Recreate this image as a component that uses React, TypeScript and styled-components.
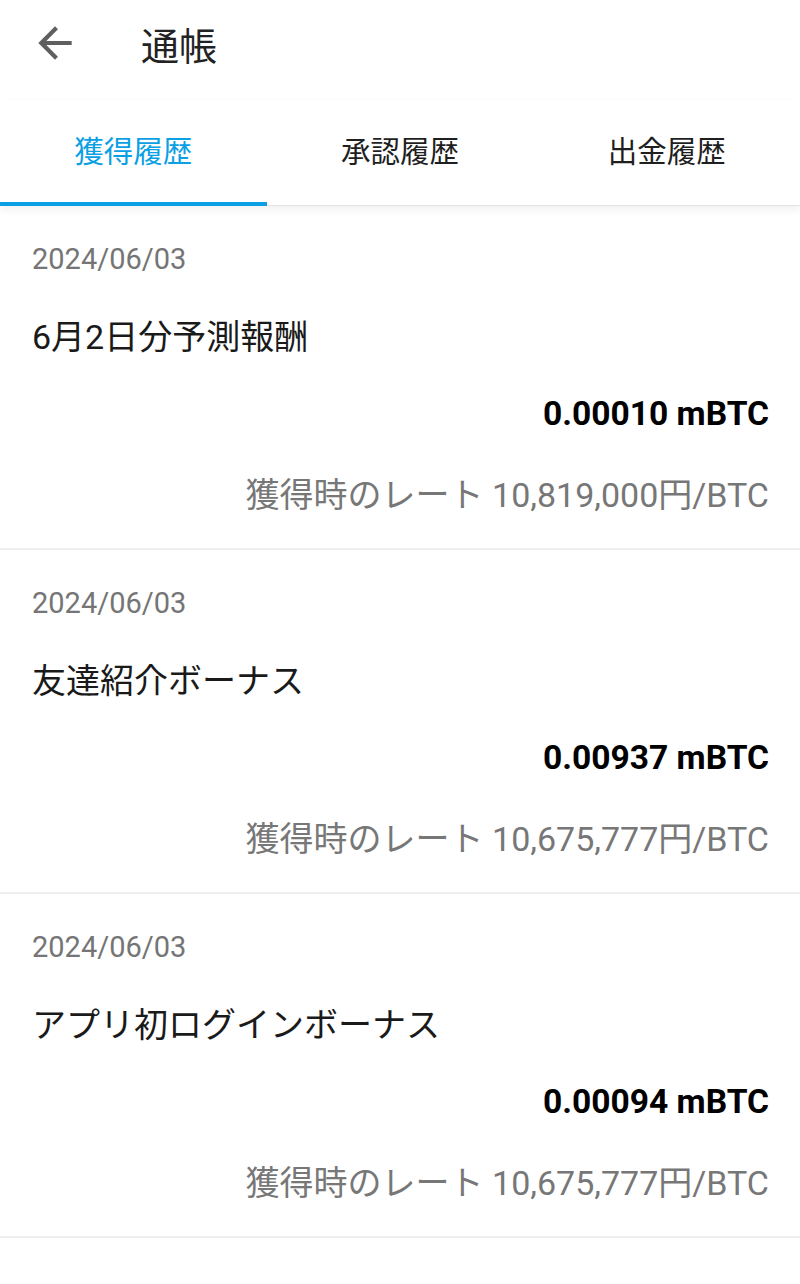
import React, { useState } from "react";
import styled, { createGlobalStyle } from "styled-components";

const GlobalStyle = createGlobalStyle`
  html, body {
    margin: 0;
    padding: 0;
    background: #ffffff;
  }
  body {
    font-family: Roboto, "Noto Sans CJK JP", sans-serif;
    -webkit-font-smoothing: antialiased;
  }
`;

const Page = styled.div`
  width: 800px;
  min-height: 1284px;
  background: #ffffff;
`;

const Header = styled.header`
  height: 100px;
  display: flex;
  align-items: center;
  padding-left: 30px;
  box-sizing: border-box;
`;

const BackButton = styled.button`
  width: 50px;
  height: 50px;
  padding: 0;
  border: none;
  background: none;
  display: flex;
  align-items: center;
  justify-content: center;
  color: #5f5f5f;
  margin-top: -15px;
`;

const Title = styled.h1`
  margin: -14px 0 0 61px;
  font-size: 38px;
  font-weight: 400;
  color: #222222;
`;

const TabBar = styled.nav`
  position: relative;
  display: grid;
  grid-template-columns: repeat(3, 1fr);
  height: 105px;
  border-bottom: 1px solid #e4e4e4;
  box-shadow: 0 4px 8px rgba(0, 0, 0, 0.06);
  z-index: 1;
`;

const Tab = styled.button<{ $active?: boolean }>`
  border: none;
  background: none;
  padding: 0 0 4px;
  font-family: inherit;
  font-size: 29.5px;
  color: ${(p) => (p.$active ? "#0ba0e4" : "#1f1f1f")};
  border-bottom: 4px solid ${(p) => (p.$active ? "#0ba0e4" : "transparent")};
  margin-bottom: -1px;
  cursor: pointer;
`;

const List = styled.ul`
  list-style: none;
  margin: 0;
  padding: 0;
`;

const Item = styled.li`
  display: flex;
  flex-direction: column;
  padding: 33px 31px 29px 32px;
  border-bottom: 2px solid #eeeeee;
`;

const DateText = styled.div`
  font-size: 29px;
  line-height: 40px;
  color: #757575;
`;

const Name = styled.div`
  margin-top: 34px;
  font-size: 34px;
  line-height: 48px;
  color: #1a1a1a;
`;

const Amount = styled.div`
  margin-top: 31px;
  font-size: 33.6px;
  line-height: 44px;
  font-weight: 700;
  color: #000000;
  text-align: right;
`;

const Rate = styled.div`
  margin-top: 35px;
  font-size: 34px;
  line-height: 48px;
  color: #777777;
  text-align: right;
`;

const entries = [
  { date: "2024/06/03", name: "6月2日分予測報酬", amount: "0.00010", rate: "10,819,000" },
  { date: "2024/06/03", name: "友達紹介ボーナス", amount: "0.00937", rate: "10,675,777" },
  { date: "2024/06/03", name: "アプリ初ログインボーナス", amount: "0.00094", rate: "10,675,777" },
];

const tabs = ["獲得履歴", "承認履歴", "出金履歴"];

const App: React.FunctionComponent = () => {
  const [tab, setTab] = useState(0);

  return (
    <Page>
      <GlobalStyle />
      <Header>
        <BackButton aria-label="戻る">
          <svg width="50" height="50" viewBox="0 0 24 24" fill="currentColor">
            <path d="M20 11H7.83l5.59-5.59L12 4l-8 8 8 8 1.41-1.41L7.83 13H20v-2z" />
          </svg>
        </BackButton>
        <Title>通帳</Title>
      </Header>
      <TabBar>
        {tabs.map((label, index) => (
          <Tab key={label} $active={index === tab} onClick={() => setTab(index)}>
            {label}
          </Tab>
        ))}
      </TabBar>
      <List>
        {entries.map((entry, index) => (
          <Item key={index}>
            <DateText>{entry.date}</DateText>
            <Name>{entry.name}</Name>
            <Amount>{entry.amount} mBTC</Amount>
            <Rate>獲得時のレート {entry.rate}円/BTC</Rate>
          </Item>
        ))}
      </List>
    </Page>
  );
};

export default App;
